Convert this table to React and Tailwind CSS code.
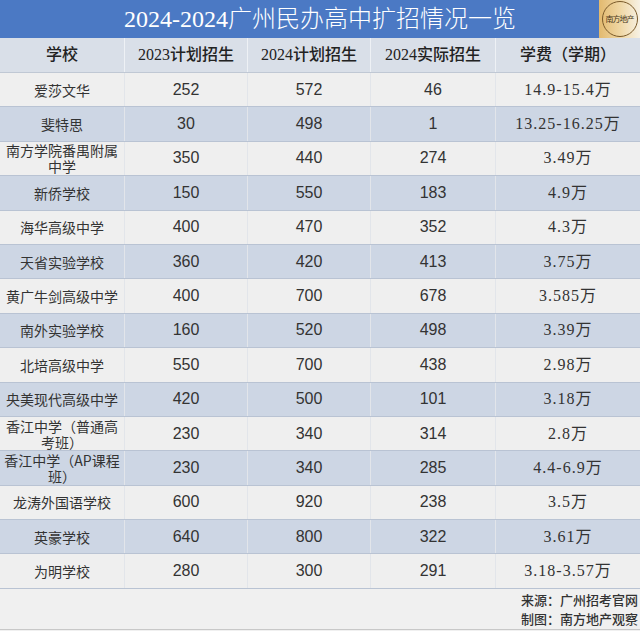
import React from "react";

const rows = [
  ["爱莎文华", "252", "572", "46", "14.9-15.4万"],
  ["斐特思", "30", "498", "1", "13.25-16.25万"],
  ["南方学院番禺附属中学", "350", "440", "274", "3.49万"],
  ["新侨学校", "150", "550", "183", "4.9万"],
  ["海华高级中学", "400", "470", "352", "4.3万"],
  ["天省实验学校", "360", "420", "413", "3.75万"],
  ["黄广牛剑高级中学", "400", "700", "678", "3.585万"],
  ["南外实验学校", "160", "520", "498", "3.39万"],
  ["北培高级中学", "550", "700", "438", "2.98万"],
  ["央美现代高级中学", "420", "500", "101", "3.18万"],
  ["香江中学（普通高考班）", "230", "340", "314", "2.8万"],
  ["香江中学（AP课程班）", "230", "340", "285", "4.4-6.9万"],
  ["龙涛外国语学校", "600", "920", "238", "3.5万"],
  ["英豪学校", "640", "800", "322", "3.61万"],
  ["为明学校", "280", "300", "291", "3.18-3.57万"],
];

const sans = { fontFamily: '"Noto Sans CJK SC", "Noto Sans", sans-serif' };
const num = { fontFamily: '"Liberation Sans", "Noto Sans CJK SC", sans-serif' };
const serif = { fontFamily: '"Liberation Serif", "Noto Sans CJK SC", serif' };

function Logo() {
  return (
    <div className="w-[41px] h-[38px] flex items-center justify-center bg-gradient-to-r from-[#e2b96e] via-[#efd6a2] to-[#f7f1e4]">
      <div className="w-[36px] h-[36px] rounded-full border border-[#7a5a2a] flex items-center justify-center">
        <span className="text-[8px] leading-none text-[#4a3a20] tracking-[-1px]" style={sans}>
          南方地产
        </span>
      </div>
    </div>
  );
}

export default function App() {
  return (
    <div className="w-[640px] h-[631px] bg-[#f0f0f0] overflow-hidden text-[#333]">
      <div className="flex h-[38px]">
        <div className="flex-1 bg-[#4b79c4] flex items-center justify-center pl-[41px]">
          <span className="text-[24px] leading-none text-white font-light" style={serif}>
            2024-2024广州民办高中扩招情况一览
          </span>
        </div>
        <Logo />
      </div>
      <div className="grid grid-cols-[125px_123px_123px_125px_144px] h-[35px] bg-[#d9dfe8] border-b border-[#c0c8d4] text-[16px] font-medium text-[#222]" style={serif}>
        <div className="flex items-center justify-center border-r border-[#eef1f5]">学校</div>
        <div className="flex items-center justify-center border-r border-[#eef1f5]">2023计划招生</div>
        <div className="flex items-center justify-center border-r border-[#eef1f5]">2024计划招生</div>
        <div className="flex items-center justify-center border-r border-[#eef1f5]">2024实际招生</div>
        <div className="flex items-center justify-center">学费（学期）</div>
      </div>
      {rows.map((r, i) => (
        <div
          key={i}
          className={
            "grid grid-cols-[125px_123px_123px_125px_144px] h-[34.4px] border-b border-[#b9c3d3] " +
            (i % 2 === 0 ? "bg-[#efefef]" : "bg-[#cdd6e4]")
          }
        >
          <div className="flex items-center justify-center text-center px-[3px] text-[14px] leading-[16px] border-r border-[#e2e5ea]" style={sans}>
            {r[0]}
          </div>
          <div className="flex items-center justify-center text-[16px] border-r border-[#e2e5ea]" style={num}>{r[1]}</div>
          <div className="flex items-center justify-center text-[16px] border-r border-[#e2e5ea]" style={num}>{r[2]}</div>
          <div className="flex items-center justify-center text-[16px] border-r border-[#e2e5ea]" style={num}>{r[3]}</div>
          <div className="flex items-center justify-center text-[16px] tracking-[1px]" style={serif}>{r[4]}</div>
        </div>
      ))}
      <div className="h-[41px] flex flex-col items-end justify-center pr-[2px] border-b border-[#c8c8c8] text-[13px] leading-[19px] font-medium text-[#333]" style={sans}>
        <div>来源：广州招考官网</div>
        <div>制图：南方地产观察</div>
      </div>
    </div>
  );
}
